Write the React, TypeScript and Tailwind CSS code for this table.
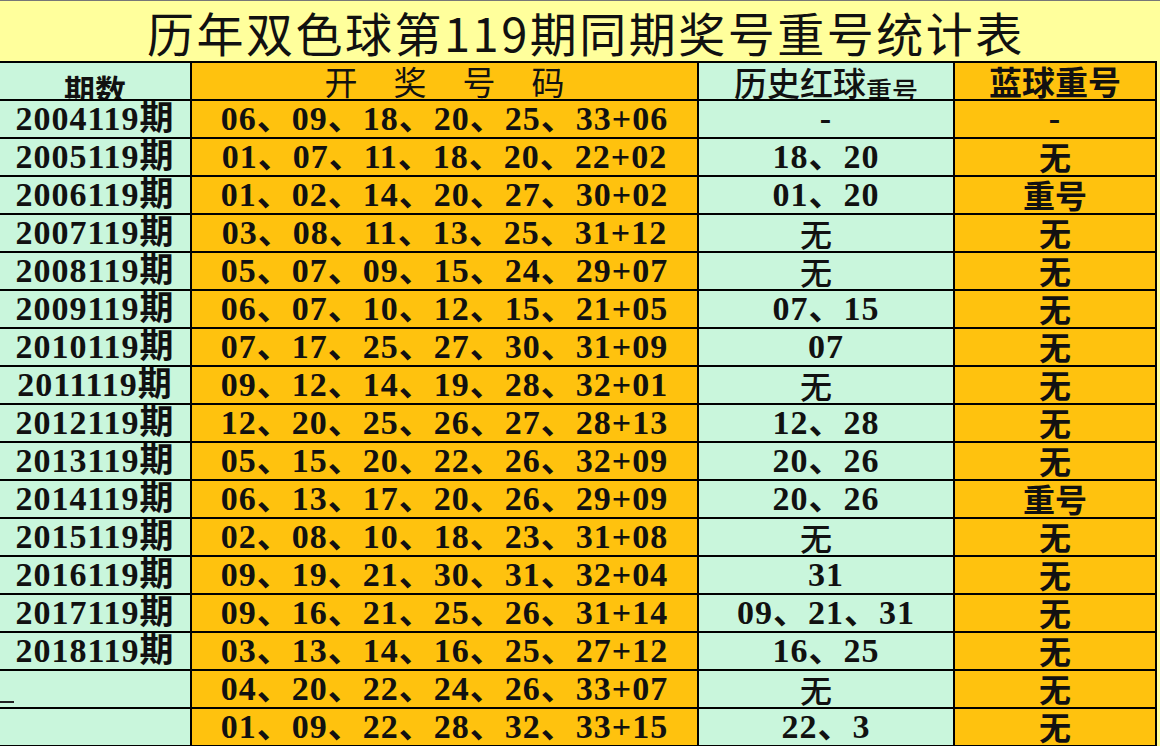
import React from "react";

type Row = { qi: string; nums: string; red: string; blue: string };

const rows: Row[] = [
  { qi: "2004119期", nums: "06、09、18、20、25、33+06", red: "-", blue: "-" },
  { qi: "2005119期", nums: "01、07、11、18、20、22+02", red: "18、20", blue: "无" },
  { qi: "2006119期", nums: "01、02、14、20、27、30+02", red: "01、20", blue: "重号" },
  { qi: "2007119期", nums: "03、08、11、13、25、31+12", red: "无", blue: "无" },
  { qi: "2008119期", nums: "05、07、09、15、24、29+07", red: "无", blue: "无" },
  { qi: "2009119期", nums: "06、07、10、12、15、21+05", red: "07、15", blue: "无" },
  { qi: "2010119期", nums: "07、17、25、27、30、31+09", red: "07", blue: "无" },
  { qi: "2011119期", nums: "09、12、14、19、28、32+01", red: "无", blue: "无" },
  { qi: "2012119期", nums: "12、20、25、26、27、28+13", red: "12、28", blue: "无" },
  { qi: "2013119期", nums: "05、15、20、22、26、32+09", red: "20、26", blue: "无" },
  { qi: "2014119期", nums: "06、13、17、20、26、29+09", red: "20、26", blue: "重号" },
  { qi: "2015119期", nums: "02、08、10、18、23、31+08", red: "无", blue: "无" },
  { qi: "2016119期", nums: "09、19、21、30、31、32+04", red: "31", blue: "无" },
  { qi: "2017119期", nums: "09、16、21、25、26、31+14", red: "09、21、31", blue: "无" },
  { qi: "2018119期", nums: "03、13、14、16、25、27+12", red: "16、25", blue: "无" },
  { qi: "", nums: "04、20、22、24、26、33+07", red: "无", blue: "无" },
  { qi: "", nums: "01、09、22、28、32、33+15", red: "22、3", blue: "无" },
];

const num =
  "font-['Liberation_Serif','Noto_Sans_CJK_SC',serif] font-bold text-[34px] leading-none tracking-[1px] text-[#111]";
const cjk = "font-['Noto_Sans_CJK_SC',sans-serif] leading-none text-[#111]";
const cell =
  "h-[38px] flex items-center justify-center border-b-2 border-r-2 border-black overflow-hidden whitespace-nowrap";

export default function App() {
  return (
    <div className="w-[1160px] h-[746px] overflow-hidden bg-[#ffff9c] border-t border-[#777]">
      {/* title */}
      <div className="h-[60px] flex items-center pl-[147px]">
        <h1 className={`${cjk} text-[47px] tracking-[2.5px]`}>
          历年双色球第119期同期奖号重号统计表
        </h1>
      </div>

      <div className="w-[1157px] grid grid-cols-[192px_507px_256px_202px] border-t-2 border-black">
        {/* header */}
        <div className={`${cell} bg-[#c9f6dc] items-end`}>
          <span className={`${cjk} font-bold text-[31px] mb-[-5px]`}>期数</span>
        </div>
        <div className={`${cell} bg-[#ffc20e]`}>
          <span className={`${cjk} text-[33px] tracking-[36px] ml-[36px]`}>开奖号码</span>
        </div>
        <div className={`${cell} bg-[#c9f6dc]`}>
          <span className={`${cjk} font-medium text-[33px] mt-[2px]`}>
            历史红球<span className="text-[26px] relative top-[5px]">重号</span>
          </span>
        </div>
        <div className={`${cell} bg-[#ffc20e]`}>
          <span className={`${cjk} font-bold text-[33px]`}>蓝球重号</span>
        </div>

        {rows.map((r, i) => (
          <React.Fragment key={i}>
            <div className={`${cell} bg-[#c9f6dc] relative`}>
              <span className={num}>{r.qi}</span>
              {i === 15 && <span className="absolute left-0 top-[30px] w-[14px] h-[2px] bg-[#222]" />}
            </div>
            <div className={`${cell} bg-[#ffc20e]`}>
              <span className={num}>{r.nums}</span>
            </div>
            <div className={`${cell} bg-[#c9f6dc]`}>
              {r.red === "无" ? (
                <span className={`${cjk} font-medium text-[32px] mr-[20px]`}>无</span>
              ) : (
                <span className={num}>{r.red}</span>
              )}
            </div>
            <div className={`${cell} bg-[#ffc20e]`}>
              {r.blue === "-" ? (
                <span className={num}>-</span>
              ) : (
                <span className={`${cjk} font-bold text-[32px] mt-[-3px]`}>{r.blue}</span>
              )}
            </div>
          </React.Fragment>
        ))}
      </div>
    </div>
  );
}
